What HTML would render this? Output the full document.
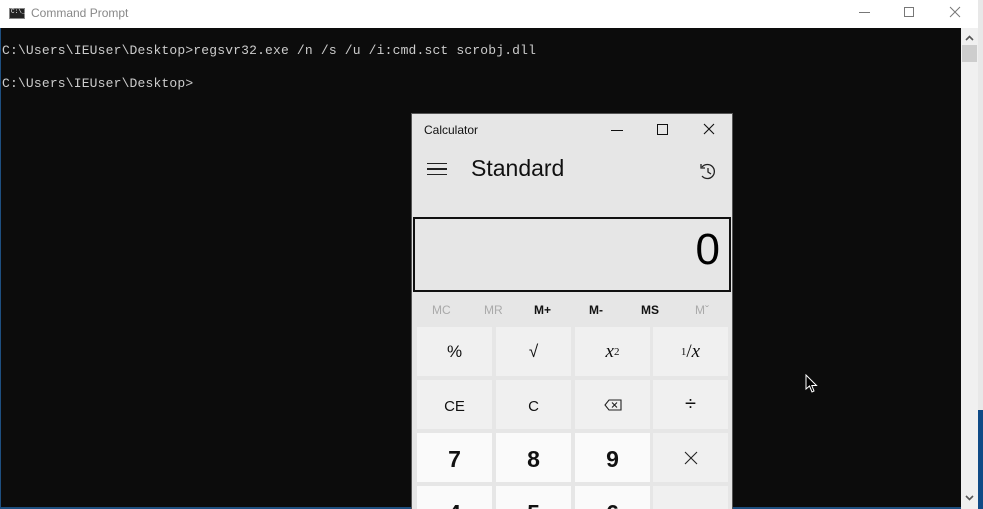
<!DOCTYPE html>
<html style="overflow:hidden;width:983px;height:509px"><head><style>
*{margin:0;padding:0;box-sizing:border-box}
body{width:983px;height:509px;overflow:hidden;background:#0c0c0c;position:relative;font-family:"Liberation Sans",sans-serif}
.abs{position:absolute}
.title{left:0;top:0;width:978px;height:28px;background:#fff}
.con{left:0;top:28px;width:961px;height:481px;background:#0c0c0c;border-left:1px solid #1e4f80}
.term{font-family:"Liberation Mono",monospace;font-size:13px;color:#cccccc;white-space:pre;letter-spacing:0.17px}
.sb{left:961px;top:28px;width:17px;height:481px;background:#f0f0f0}
.desk{left:978px;top:0;width:5px;height:509px;background:#e8e8e8}
.calc{left:411px;top:113px;width:322px;height:396px;background:#e6e6e6;border:1px solid #555;border-bottom:none;overflow:hidden}
.btn{position:absolute;width:75px;height:49px;background:#f0f0f0;display:flex;align-items:center;justify-content:center;font-size:17px;color:#111}
.dig{background:#fafafa;font-size:23px;font-weight:bold}
.mem{position:absolute;top:189px;font-size:12px;color:#111;font-weight:bold}
</style></head><body>
<div class="abs title">
  <div class="abs" style="left:9px;top:8px;width:16px;height:11px;background:#222;border:1px solid #888"><span style="position:absolute;left:1px;top:-1px;font-size:6px;color:#fff;font-family:'Liberation Mono'">C:\_</span></div>
  <div class="abs" style="left:31px;top:6px;font-size:12px;color:#888">Command Prompt</div>
  <div class="abs" style="left:859px;top:12px;width:11px;height:1px;background:#777"></div>
  <div class="abs" style="left:904px;top:7px;width:10px;height:10px;border:1px solid #777"></div>
  <svg class="abs" style="left:949px;top:6px" width="12" height="12"><path d="M1 1L11 11M11 1L1 11" stroke="#777" stroke-width="1"/></svg>
</div>
<div class="abs con">
  <div class="abs term" style="left:1px;top:15px">C:\Users\IEUser\Desktop&gt;regsvr32.exe /n /s /u /i:cmd.sct scrobj.dll</div>
  <div class="abs term" style="left:1px;top:48px">C:\Users\IEUser\Desktop&gt;</div>
</div>
<div class="abs" style="left:0;top:507px;width:961px;height:2px;background:#1e4f80"></div>
<div class="abs sb">
  <svg class="abs" style="left:4px;top:7px" width="9" height="6"><path d="M1 5L4.5 1.5L8 5" stroke="#555" stroke-width="1.6" fill="none"/></svg>
  <div class="abs" style="left:1px;top:17px;width:15px;height:17px;background:#cdcdcd"></div>
  <svg class="abs" style="left:4px;top:467px" width="9" height="6"><path d="M1 1L4.5 4.5L8 1" stroke="#555" stroke-width="1.6" fill="none"/></svg>
</div>
<div class="abs desk"><div class="abs" style="left:0;top:410px;width:5px;height:99px;background:#0f4a86"></div></div>
<svg class="abs" style="left:805px;top:374px" width="13" height="20"><path d="M1 1L1 15L4.5 12L7 18L9 17L6.8 11.5L11.5 11.5Z" fill="#000" stroke="#fff" stroke-width="1"/></svg>

<div class="abs calc">
  <div class="abs" style="left:12px;top:9px;font-size:12px;color:#111">Calculator</div>
  <div class="abs" style="left:199px;top:16px;width:12px;height:1px;background:#111"></div>
  <div class="abs" style="left:245px;top:10px;width:11px;height:11px;border:1px solid #111"></div>
  <svg class="abs" style="left:291px;top:9px" width="12" height="12"><path d="M1 1L11 11M11 1L1 11" stroke="#111" stroke-width="1.1"/></svg>
  <div class="abs" style="left:15px;top:49px;width:20px;height:12px;border-top:1.5px solid #222;border-bottom:1.5px solid #222"><div style="margin-top:4px;height:1.5px;background:#222"></div></div>
  <div class="abs" style="left:59px;top:41px;font-size:23px;color:#111">Standard</div>
  <svg class="abs" style="left:287px;top:49px" width="18" height="18"><path d="M3 4A7 7 0 1 1 3 13" stroke="#222" stroke-width="1.3" fill="none"/><path d="M2 1V5H6" stroke="#222" stroke-width="1.3" fill="none"/><path d="M9 5V9L12 11" stroke="#222" stroke-width="1.3" fill="none"/></svg>
  <div class="abs" style="left:1px;top:103px;width:318px;height:75px;border:2px solid #111;background:#e6e6e6"><div class="abs" style="right:9px;top:6px;font-size:44px;color:#000">0</div></div>
  <div class="mem" style="left:20px;color:#aaa;font-weight:normal">MC</div>
  <div class="mem" style="left:72px;color:#aaa;font-weight:normal">MR</div>
  <div class="mem" style="left:122px">M+</div>
  <div class="mem" style="left:177px">M-</div>
  <div class="mem" style="left:229px">MS</div>
  <div class="mem" style="left:283px;color:#aaa;font-weight:normal">Mˇ</div>

  <div class="btn" style="left:5px;top:213px">%</div>
  <div class="btn" style="left:84px;top:213px">√</div>
  <div class="btn" style="left:163px;top:213px;font-family:'Liberation Serif';font-style:italic;font-size:19px">x<sup style="font-size:11px;font-style:normal">2</sup></div>
  <div class="btn" style="left:241px;top:213px;font-family:'Liberation Serif';font-size:19px"><sup style="font-size:11px">1</sup>/<i>x</i></div>

  <div class="btn" style="left:5px;top:266px;font-size:15px;padding-top:4px">CE</div>
  <div class="btn" style="left:84px;top:266px;font-size:15px;padding-top:4px">C</div>
  <div class="btn" style="left:163px;top:266px"><svg width="18" height="12"><path d="M5 1H17V11H5L1 6Z" stroke="#222" stroke-width="1.1" fill="none"/><path d="M8 3.5L13 8.5M13 3.5L8 8.5" stroke="#222" stroke-width="1.1"/></svg></div>
  <div class="btn" style="left:241px;top:266px;font-size:20px">÷</div>

  <div class="btn dig" style="left:5px;top:319px;padding-top:4px">7</div>
  <div class="btn dig" style="left:84px;top:319px;padding-top:4px">8</div>
  <div class="btn dig" style="left:163px;top:319px;padding-top:4px">9</div>
  <div class="btn" style="left:241px;top:319px"><svg width="14" height="14"><path d="M1 1L13 13M13 1L1 13" stroke="#222" stroke-width="1.1"/></svg></div>

  <div class="btn dig" style="left:5px;top:372px;align-items:flex-start;padding-top:14px">4</div>
  <div class="btn dig" style="left:84px;top:372px;align-items:flex-start;padding-top:14px">5</div>
  <div class="btn dig" style="left:163px;top:372px;align-items:flex-start;padding-top:14px">6</div>
  <div class="btn" style="left:241px;top:372px"></div>
</div>
</body></html>
